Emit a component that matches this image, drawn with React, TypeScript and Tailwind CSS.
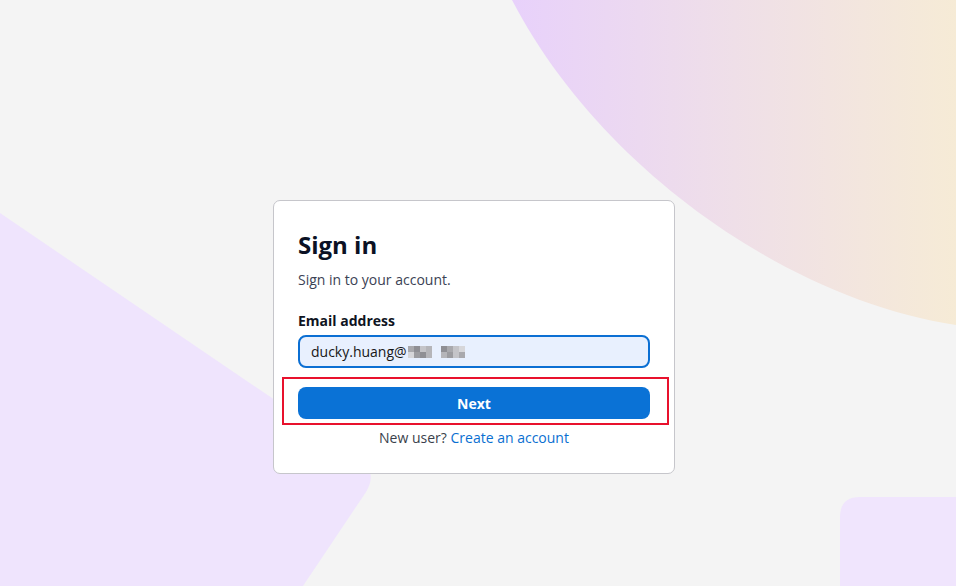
import React from 'react';

const font = { fontFamily: '"Open Sans", "Noto Sans", sans-serif' };

function Backdrop() {
  return (
    <svg
      className="absolute inset-0 h-full w-full"
      viewBox="0 0 956 586"
      preserveAspectRatio="none"
    >
      <defs>
        <linearGradient id="arc" x1="512" y1="0" x2="956" y2="0" gradientUnits="userSpaceOnUse">
          <stop offset="0" stopColor="#e8d1fb" />
          <stop offset="0.5" stopColor="#efdfe8" />
          <stop offset="1" stopColor="#f6ebd6" />
        </linearGradient>
      </defs>
      <path d="M512 0 C 600 170 790 300 956 325 L 956 0 Z" fill="url(#arc)" />
      <path
        d="M0 213 L 360 458 Q 378 472 366 492 L 303 586 L 0 586 Z"
        fill="#efe4fd"
      />
      <path d="M840 586 L 840 517 Q 840 497 860 497 L 956 497 L 956 586 Z" fill="#f0e5fd" />
    </svg>
  );
}

function Blur() {
  const a = ['#a9a9ad', '#8f8f94', '#c4c4c8', '#b5b5b9', '#d6d6d9', '#9c9ca0'];
  return (
    <span className="ml-[1px] inline-flex items-center gap-[9px]">
      <span className="grid grid-cols-4 grid-rows-2">
        {[0, 1, 2, 3, 4, 5, 1, 3].map((c, i) => (
          <span key={i} className="h-[6px] w-[6px]" style={{ background: a[c] }} />
        ))}
      </span>
      <span className="grid grid-cols-4 grid-rows-2">
        {[1, 0, 2, 4, 3, 5, 2, 0].map((c, i) => (
          <span key={i} className="h-[6px] w-[6px]" style={{ background: a[c] }} />
        ))}
      </span>
    </span>
  );
}

export default function App() {
  return (
    <div className="relative h-[586px] w-[956px] overflow-hidden bg-[#f4f4f4]" style={font}>
      <Backdrop />

      <div className="relative pl-[273px] pt-[200px]">
        <div className="w-[402px] rounded-[7px] border border-[#c6c6cb] bg-white px-6 pb-[25px] pt-[28px]">
          <h1 className="text-[24px] font-bold leading-8 text-[#0b1124]">Sign in</h1>
          <p className="mt-[9px] text-[14px] leading-5 text-[#3b4254]">Sign in to your account.</p>

          <label className="mt-[21px] block text-[14px] font-bold leading-5 text-[#0f1422]">
            Email address
          </label>
          <div className="mt-1 flex h-[33px] items-center rounded-[8px] border-2 border-[#0b6fd3] bg-[#e8f0fe] pl-[11px] text-[14px] text-[#161616]">
            ducky.huang@
            <Blur />
          </div>

          <div className="relative mt-[19px]">
            <div className="pointer-events-none absolute -left-4 -right-[19px] -top-[10px] -bottom-[6px] border-2 border-[#e8112d]" />
            <button className="flex h-8 w-full items-center justify-center rounded-[8px] bg-[#0a72d6] text-[14px] font-bold text-white">
              Next
            </button>
          </div>

          <p className="mt-[9px] text-center text-[14px] leading-5 text-[#3a3f4b]">
            New user? <a className="text-[#0a6fd1]">Create an account</a>
          </p>
        </div>
      </div>
    </div>
  );
}
